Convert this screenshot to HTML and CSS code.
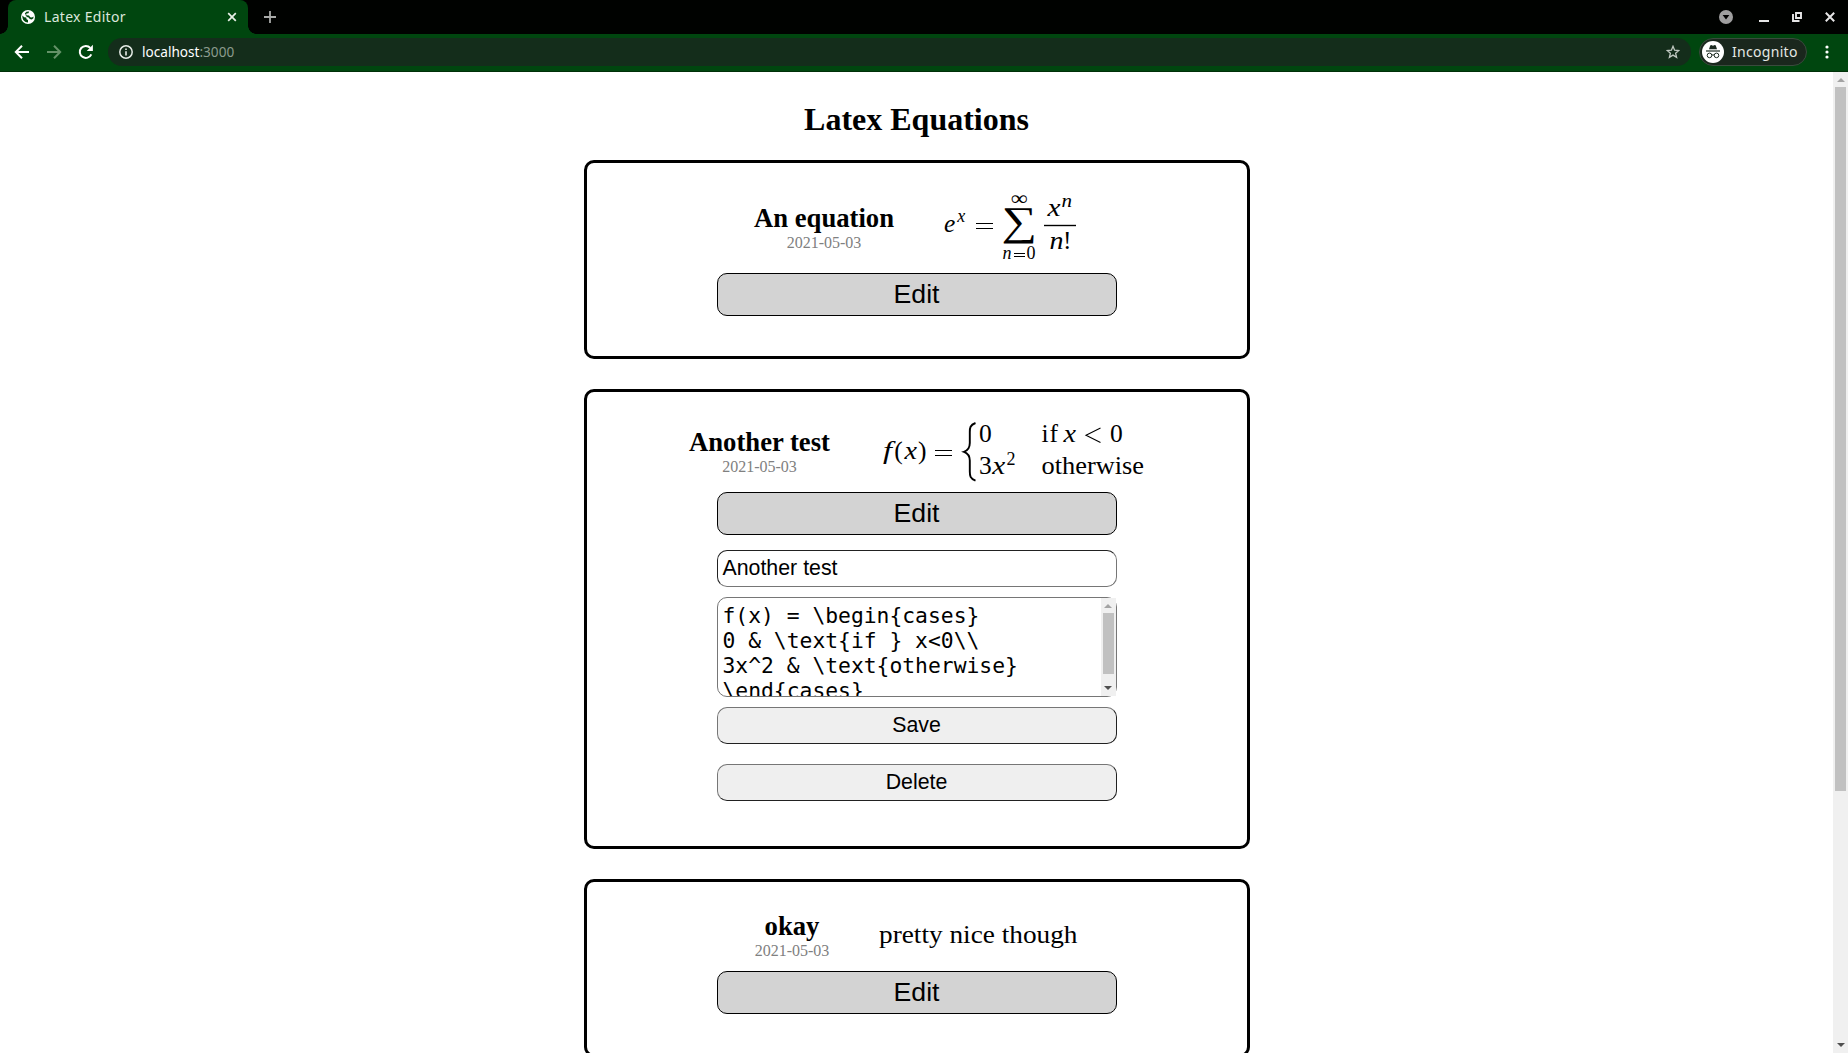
FILE: index.html
```html
<!DOCTYPE html>
<html lang="en">
<head>
<meta charset="utf-8">
<title>Latex Editor</title>
<link rel="stylesheet" href="styles.css">
</head>
<body>
<div class="browser">
  <header class="tabstrip">
    <div class="tab">
      <svg class="favicon" width="14" height="14" viewBox="0 0 14 14"><circle cx="7" cy="7" r="7" fill="#fff"/><path d="M1.4 5.6 3.2 7.2 5.2 7.6 5.6 9.2 7 10v2.6C3.500 12.500 1 9.800 1.400 5.600ZM8.200 1.500 7.400 3.200 5.400 3.600 5.200 5.200 8 5.600 9.200 7.200 11 7.400 12.500 6.400 12.400 8.200 10.800 9.600 8.800 9 7.600 7.600 6 7 4.800 5.800 4.600 4.400 3.800 3.600 5.400 1.800Z" fill="#00460f"/></svg>
      <span class="tab-title">Latex Editor</span>
      <svg width="10" height="10" viewBox="0 0 10 10"><path d="M1.200 1.200 8.800 8.800M8.800 1.200 1.200 8.800" stroke="#e8f0e8" stroke-width="1.700"/></svg>
    </div>
    <svg class="new-tab" width="12" height="12" viewBox="0 0 12 12"><path d="M6 0v12M0 6h12" stroke="#a8aaa8" stroke-width="1.800"/></svg>
    <div class="window-controls">
      <svg width="14" height="14" viewBox="0 0 14 14"><circle cx="7" cy="7" r="7" fill="#9f9f9f"/><path d="M3.600 5h6.800L7 9.600Z" fill="#000"/></svg>
      <svg width="10" height="10" viewBox="0 0 10 10"><path d="M0 9h10" stroke="#e6e6e6" stroke-width="2"/></svg>
      <svg width="10" height="10" viewBox="0 0 10 10"><path d="M4 1h5v5H4ZM1 2v7h6.500" fill="none" stroke="#e6e6e6" stroke-width="1.900"/></svg>
      <svg width="10" height="10" viewBox="0 0 10 10"><path d="M.8.8 9.200 9.200M9.200.8.8 9.200" stroke="#e6e6e6" stroke-width="2"/></svg>
    </div>
  </header>
  <nav class="toolbar">
    <svg class="nav-icon" width="16" height="16" viewBox="0 0 16 16"><path d="M15 8H2M8 1.700 1.800 8 8 14.300" fill="none" stroke="#fff" stroke-width="2"/></svg>
    <svg class="nav-icon" width="16" height="16" viewBox="0 0 16 16"><path d="M1 8h13M8 1.700 14.200 8 8 14.300" fill="none" stroke="#649268" stroke-width="2"/></svg>
    <svg class="nav-icon" width="16" height="16" viewBox="0 0 16 16"><path d="M13.300 10.300A6 6 0 1 1 12.300 3.900" fill="none" stroke="#fff" stroke-width="2"/><path d="M14.900.8V7H8.700Z" fill="#fff"/></svg>
    <div class="omnibox">
      <svg width="14" height="14" viewBox="0 0 14 14"><circle cx="7" cy="7" r="6.200" fill="none" stroke="#e6ece7" stroke-width="1.500"/><path d="M7 6.200v4.300M7 3.500v1.600" stroke="#e6ece7" stroke-width="1.600"/></svg>
      <span class="url">localhost<span class="port">:3000</span></span>
      <svg class="star" width="14" height="14" viewBox="0 0 14 14"><path d="M7 1.300 8.600 5.200l4.200.3-3.200 2.700 1 4.100L7 10.100l-3.600 2.200 1-4.100L1.200 5.500l4.200-.3Z" fill="none" stroke="#c0c8c1" stroke-width="1.300"/></svg>
    </div>
    <div class="incognito">
      <svg width="22" height="22" viewBox="0 0 22 22"><circle cx="11" cy="11" r="11" fill="#fff"/><path d="m7 8.300 1.200-3.800 1-.4 1.800.6 1.800-.6 1 .4L15 8.300Z" fill="#1b2a20"/><path d="M4 10h14" stroke="#1b2a20" stroke-width="1.200"/><circle cx="7.500" cy="14.400" r="2.300" fill="none" stroke="#1b2a20"/><circle cx="14.500" cy="14.400" r="2.300" fill="none" stroke="#1b2a20"/><path d="M9.800 14.200q1.200-.8 2.400 0" fill="none" stroke="#1b2a20"/></svg>
      <span class="incognito-label">Incognito</span>
    </div>
    <svg class="menu" width="4" height="14" viewBox="0 0 4 14"><circle cx="2" cy="2" r="1.600" fill="#fff"/><circle cx="2" cy="7" r="1.600" fill="#fff"/><circle cx="2" cy="12" r="1.600" fill="#fff"/></svg>
  </nav>

  <div class="viewport">
    <main class="page">
      <h1>Latex Equations</h1>

      <section class="card">
        <div class="summary">
          <div class="caption"><div class="name">An equation</div><div class="date">2021-05-03</div></div>
          <svg class="math" width="135" height="70" viewBox="0 0 135 70">
            <text class="it" x="0" y="39" textLength="12">e</text>
            <text class="it sub" x="13.300" y="28.500" textLength="9">x</text>
            <path class="rule" d="M32 30.500h17M32 35.500h17"/>
            <text class="inf" x="66.500" y="11.500" textLength="17" lengthAdjust="spacingAndGlyphs">∞</text>
            <text class="sum" x="57.500" y="42" textLength="35.500" lengthAdjust="spacingAndGlyphs">∑</text>
            <text class="it sub" x="58.500" y="66.300" textLength="9.500">n</text>
            <path class="rule" d="M70 60.500h11M70 63.500h11"/>
            <text class="sub" x="82.500" y="66.300">0</text>
            <text class="it" x="103.500" y="22.500" textLength="13" lengthAdjust="spacingAndGlyphs">x</text>
            <text class="it sub" x="117.500" y="13.800" textLength="10.500" lengthAdjust="spacingAndGlyphs">n</text>
            <path d="M100 32.500h32" stroke="#000" stroke-width="1.400"/>
            <text class="it" x="105.500" y="56.300" textLength="14" lengthAdjust="spacingAndGlyphs">n</text>
            <text x="119" y="56.300">!</text>
          </svg>
        </div>
        <button class="edit">Edit</button>
      </section>

      <section class="card card-open">
        <div class="summary">
          <div class="caption"><div class="name">Another test</div><div class="date">2021-05-03</div></div>
          <svg class="math" width="264" height="60" viewBox="0 0 264 60">
            <text class="it" x="3" y="37" textLength="9" lengthAdjust="spacingAndGlyphs">f</text>
            <text x="14.300" y="37">(</text>
            <text class="it" x="24.500" y="37" textLength="12.500" lengthAdjust="spacingAndGlyphs">x</text>
            <text x="38" y="37">)</text>
            <path class="rule" d="M55 28.500h17M55 33.500h17"/>
            <path d="M95.500 1C90 3 89.800 6 89.800 10v11c0 4-1.500 7.300-5.800 8.800 4.300 1.500 5.800 4.800 5.800 8.800v11c0 4 .2 7 5.700 9" fill="none" stroke="#000" stroke-width="1.900"/>
            <text x="99" y="20.300">0</text>
            <text x="99" y="52">3</text>
            <text class="it" x="112.200" y="52" textLength="13" lengthAdjust="spacingAndGlyphs">x</text>
            <text class="sub" x="126.500" y="43">2</text>
            <text x="161.500" y="20.300" textLength="16.500">if</text>
            <text class="it" x="183.500" y="20.300" textLength="12.500" lengthAdjust="spacingAndGlyphs">x</text>
            <path class="rule" d="M220.500 6 206 13.200l14.500 7.200"/>
            <text x="230" y="20.300">0</text>
            <text x="161.500" y="52" textLength="102.500" lengthAdjust="spacingAndGlyphs">otherwise</text>
          </svg>
        </div>
        <button class="edit">Edit</button>
        <form class="form">
          <div class="field">Another test</div>
          <div class="code">
            <pre class="code-text">f(x) = \begin{cases}
0 &amp; \text{if } x&lt;0\\
3x^2 &amp; \text{otherwise}
\end{cases}</pre>
            <div class="scrollbar"><i class="up"></i><i class="thumb"></i><i class="down"></i></div>
          </div>
          <button class="action" type="button">Save</button>
          <button class="action delete" type="button">Delete</button>
        </form>
      </section>

      <section class="card">
        <div class="summary">
          <div class="caption"><div class="name">okay</div><div class="date">2021-05-03</div></div>
          <svg class="math" width="199" height="49" viewBox="0 0 199 49">
            <text x="0" y="31.300" textLength="198.500" lengthAdjust="spacingAndGlyphs">pretty nice though</text>
          </svg>
        </div>
        <button class="edit">Edit</button>
      </section>
    </main>
    <div class="scrollbar page-scrollbar"><i class="up"></i><i class="thumb"></i><i class="down"></i></div>
  </div>
</div>
</body>
</html>
```
FILE: styles.css
```css
* { box-sizing: border-box; }

body {
  margin: 0;
  overflow: hidden;
  background: #fff;
  color: #000;
  font-family: "Liberation Serif", serif;
  font-size: 16px;
}

svg { display: block; flex: none; }

.browser {
  display: flex;
  flex-direction: column;
  height: 1053px;
}

/* Tab strip */
.tabstrip {
  display: flex;
  align-items: center;
  flex: none;
  height: 34px;
  padding-left: 8px;
  background: #000200;
  font-family: "Noto Sans", sans-serif;
}

.tab {
  position: relative;
  display: flex;
  align-items: center;
  width: 240px;
  height: 34px;
  padding: 0 11px 0 13px;
  border-radius: 8px 8px 0 0;
  background: #00460f;
}

.tab::before,
.tab::after {
  content: "";
  position: absolute;
  bottom: 0;
  width: 8px;
  height: 8px;
}

.tab::before {
  left: -8px;
  background: radial-gradient(circle at 0 0, transparent 7.5px, #00460f 8px);
}

.tab::after {
  right: -8px;
  background: radial-gradient(circle at 100% 0, transparent 7.5px, #00460f 8px);
}

.tab-title {
  flex: 1;
  margin-left: 9px;
  color: #dbe6dc;
  font-size: 14px;
  line-height: 34px;
  letter-spacing: 0.3px;
}

.new-tab { margin-left: 16px; }

.window-controls {
  display: flex;
  align-items: center;
  margin-left: auto;
  padding-right: 13px;
}

.window-controls svg + svg { margin-left: 23px; }
.window-controls svg:nth-child(2) { margin-left: 26px; }

/* Toolbar */
.toolbar {
  display: flex;
  align-items: center;
  flex: none;
  height: 38px;
  padding: 0 20px 2px 14px;
  border-bottom: 1px solid #003008;
  background: #00460f;
  font-family: "Noto Sans", sans-serif;
  font-size: 14px;
}

.nav-icon { margin-right: 16px; }

.omnibox {
  display: flex;
  align-items: center;
  flex: 1;
  height: 28px;
  margin-left: -2px;
  padding: 0 11px;
  border-radius: 14px;
  background: #142d1b;
}

.url {
  margin-left: 9px;
  color: #fff;
  font-size: 13.600px;
}

.port { color: #8b9b8e; }
.star { margin-left: auto; }

.incognito {
  display: flex;
  align-items: center;
  width: 108px;
  height: 28px;
  margin-left: 8px;
  padding-left: 2px;
  border: 1px solid #3a4a3d;
  border-radius: 14px;
  background: #1a271d;
}

.incognito-label {
  margin-left: 8px;
  color: #e4e8e4;
  letter-spacing: 0.3px;
}

.menu { margin: 0 -1px 0 18px; }

/* Page */
.viewport {
  display: flex;
  flex: 1;
  min-height: 0;
  overflow: hidden;
}

.page {
  display: flex;
  flex-direction: column;
  align-items: center;
  flex: 1;
  padding-top: 29px;
}

h1 {
  flex: none;
  margin: 0 0 22px;
  font-size: 32px;
  line-height: 37px;
}

.card {
  display: flex;
  flex-direction: column;
  align-items: center;
  flex: none;
  width: 666px;
  margin-bottom: 30px;
  padding: 30px 30px 40px;
  border: 3px solid #000;
  border-radius: 10px;
}

.card-open { padding-bottom: 45px; }

.summary {
  display: flex;
  align-items: center;
  gap: 50px;
  margin-bottom: 10px;
}

.caption {
  margin: -1px 0 1px;
  text-align: center;
}

.name {
  font-size: 26.667px;
  font-weight: bold;
  line-height: 31px;
}

.date {
  color: gray;
  line-height: 18px;
}

.math {
  overflow: visible;
  font-family: "Liberation Serif", serif;
  font-size: 25.500px;
}

.it { font-style: italic; }
.sub { font-size: 18px; }
.inf { font-size: 20px; }
.sum { font-size: 41px; }

.rule {
  fill: none;
  stroke: #000;
  stroke-width: 1.100;
}

.edit,
.action,
.field {
  width: 400px;
  margin: 0;
  padding: 5px;
  border: 1px solid #000;
  border-radius: 10px;
  color: #000;
  font-family: "Liberation Sans", sans-serif;
}

.edit {
  height: 43px;
  background: #d3d3d3;
  font-size: 26.667px;
  line-height: 31px;
}

.form {
  display: flex;
  flex-direction: column;
  gap: 10px;
  margin-top: 15px;
}

.field {
  height: 37px;
  border-color: #212121 #767676 #767676 #212121;
  font-size: 21.333px;
  line-height: 25px;
}

.action {
  height: 37px;
  border-color: #767676 #212121 #212121 #767676;
  background: #efefef;
  font-size: 21.333px;
  line-height: 25px;
}

.delete { margin-top: 10px; }

.code {
  display: flex;
  width: 400px;
  height: 100px;
  border: 1px solid #767676;
  border-radius: 10px;
}

.code-text {
  flex: 1;
  margin: 0;
  padding: 5px;
  overflow: hidden;
  font-family: "DejaVu Sans Mono", monospace;
  font-size: 21.333px;
  line-height: 25px;
}

/* Scrollbars */
.scrollbar {
  display: flex;
  flex-direction: column;
  align-items: center;
  flex: none;
  width: 15px;
  background: #f0f0f0;
}

.up,
.down {
  width: 0;
  height: 0;
  border: 4px solid transparent;
}

.up {
  margin-top: 6px;
  border-top: 0;
  border-bottom-color: #a3a3a3;
}

.down {
  margin: auto 0 6px;
  border-bottom: 0;
  border-top-color: #505050;
}

.thumb {
  width: 11px;
  height: 61px;
  margin-top: 5px;
  background: #c1c1c1;
}

.page-scrollbar .thumb { height: 704px; }
```
